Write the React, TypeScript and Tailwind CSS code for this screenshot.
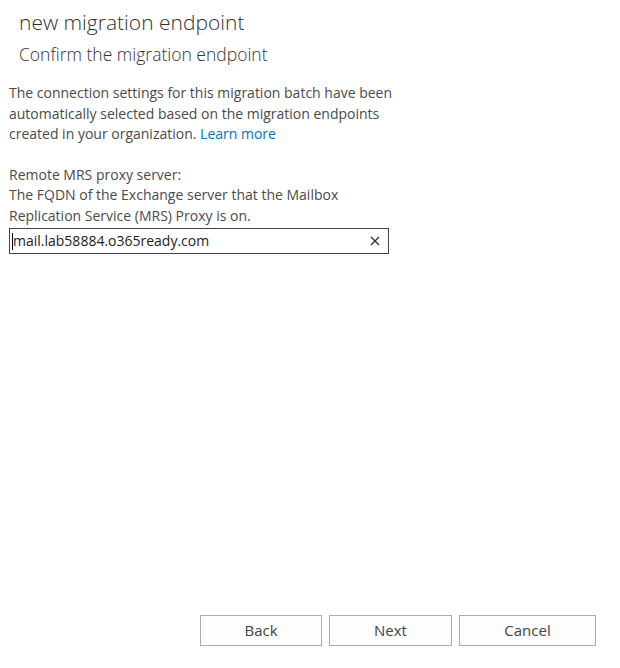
import React from 'react'

const font = { fontFamily: '"Open Sans", "Noto Sans", sans-serif' }

export default function App() {
  return (
    <div className="flex h-[668px] w-[620px] flex-col bg-white text-[#4a4a4a]" style={font}>
      <div className="pl-[19px] pt-[9px]">
        <h1 className="text-[21px] font-light leading-[27px] text-[#333]">new migration endpoint</h1>
        <h2 className="mt-[7px] text-[17.5px] font-light leading-[23px] text-[#333]">Confirm the migration endpoint</h2>
      </div>
      <div className="pl-[9px] pt-[17px] text-[14px] leading-[20.5px]">
        <p className="w-[395px]">
          The connection settings for this migration batch have been automatically selected based on the migration
          endpoints created in your organization. <span className="text-[#0072c6]">Learn more</span>
        </p>
        <p className="mt-[20px]">Remote MRS proxy server:</p>
        <p className="w-[360px]">The FQDN of the Exchange server that the Mailbox Replication Service (MRS) Proxy is on.</p>
        <div className="mt-[2px] flex h-[26px] w-[380px] items-center border border-[#444] pl-[2px] pr-[8px]">
          <span className="h-[17px] w-px bg-black" />
          <span className="flex-1 text-[14px] text-[#222]">mail.lab58884.o365ready.com</span>
          <svg width="10" height="10" viewBox="0 0 10 10" className="text-[#333]">
            <path d="M1 1L9 9M9 1L1 9" stroke="currentColor" strokeWidth="1.4" />
          </svg>
        </div>
      </div>
      <div className="mt-auto flex gap-[7px] pb-[22px] pl-[200px]">
        <button className="h-[31px] w-[122px] border border-[#ababab] bg-[#fdfdfd] text-[15px] text-[#444]">Back</button>
        <button className="h-[31px] w-[123px] border border-[#ababab] bg-[#fdfdfd] text-[15px] text-[#444]">Next</button>
        <button className="h-[31px] w-[137px] border border-[#ababab] bg-[#fdfdfd] text-[15px] text-[#444]">Cancel</button>
      </div>
    </div>
  )
}
